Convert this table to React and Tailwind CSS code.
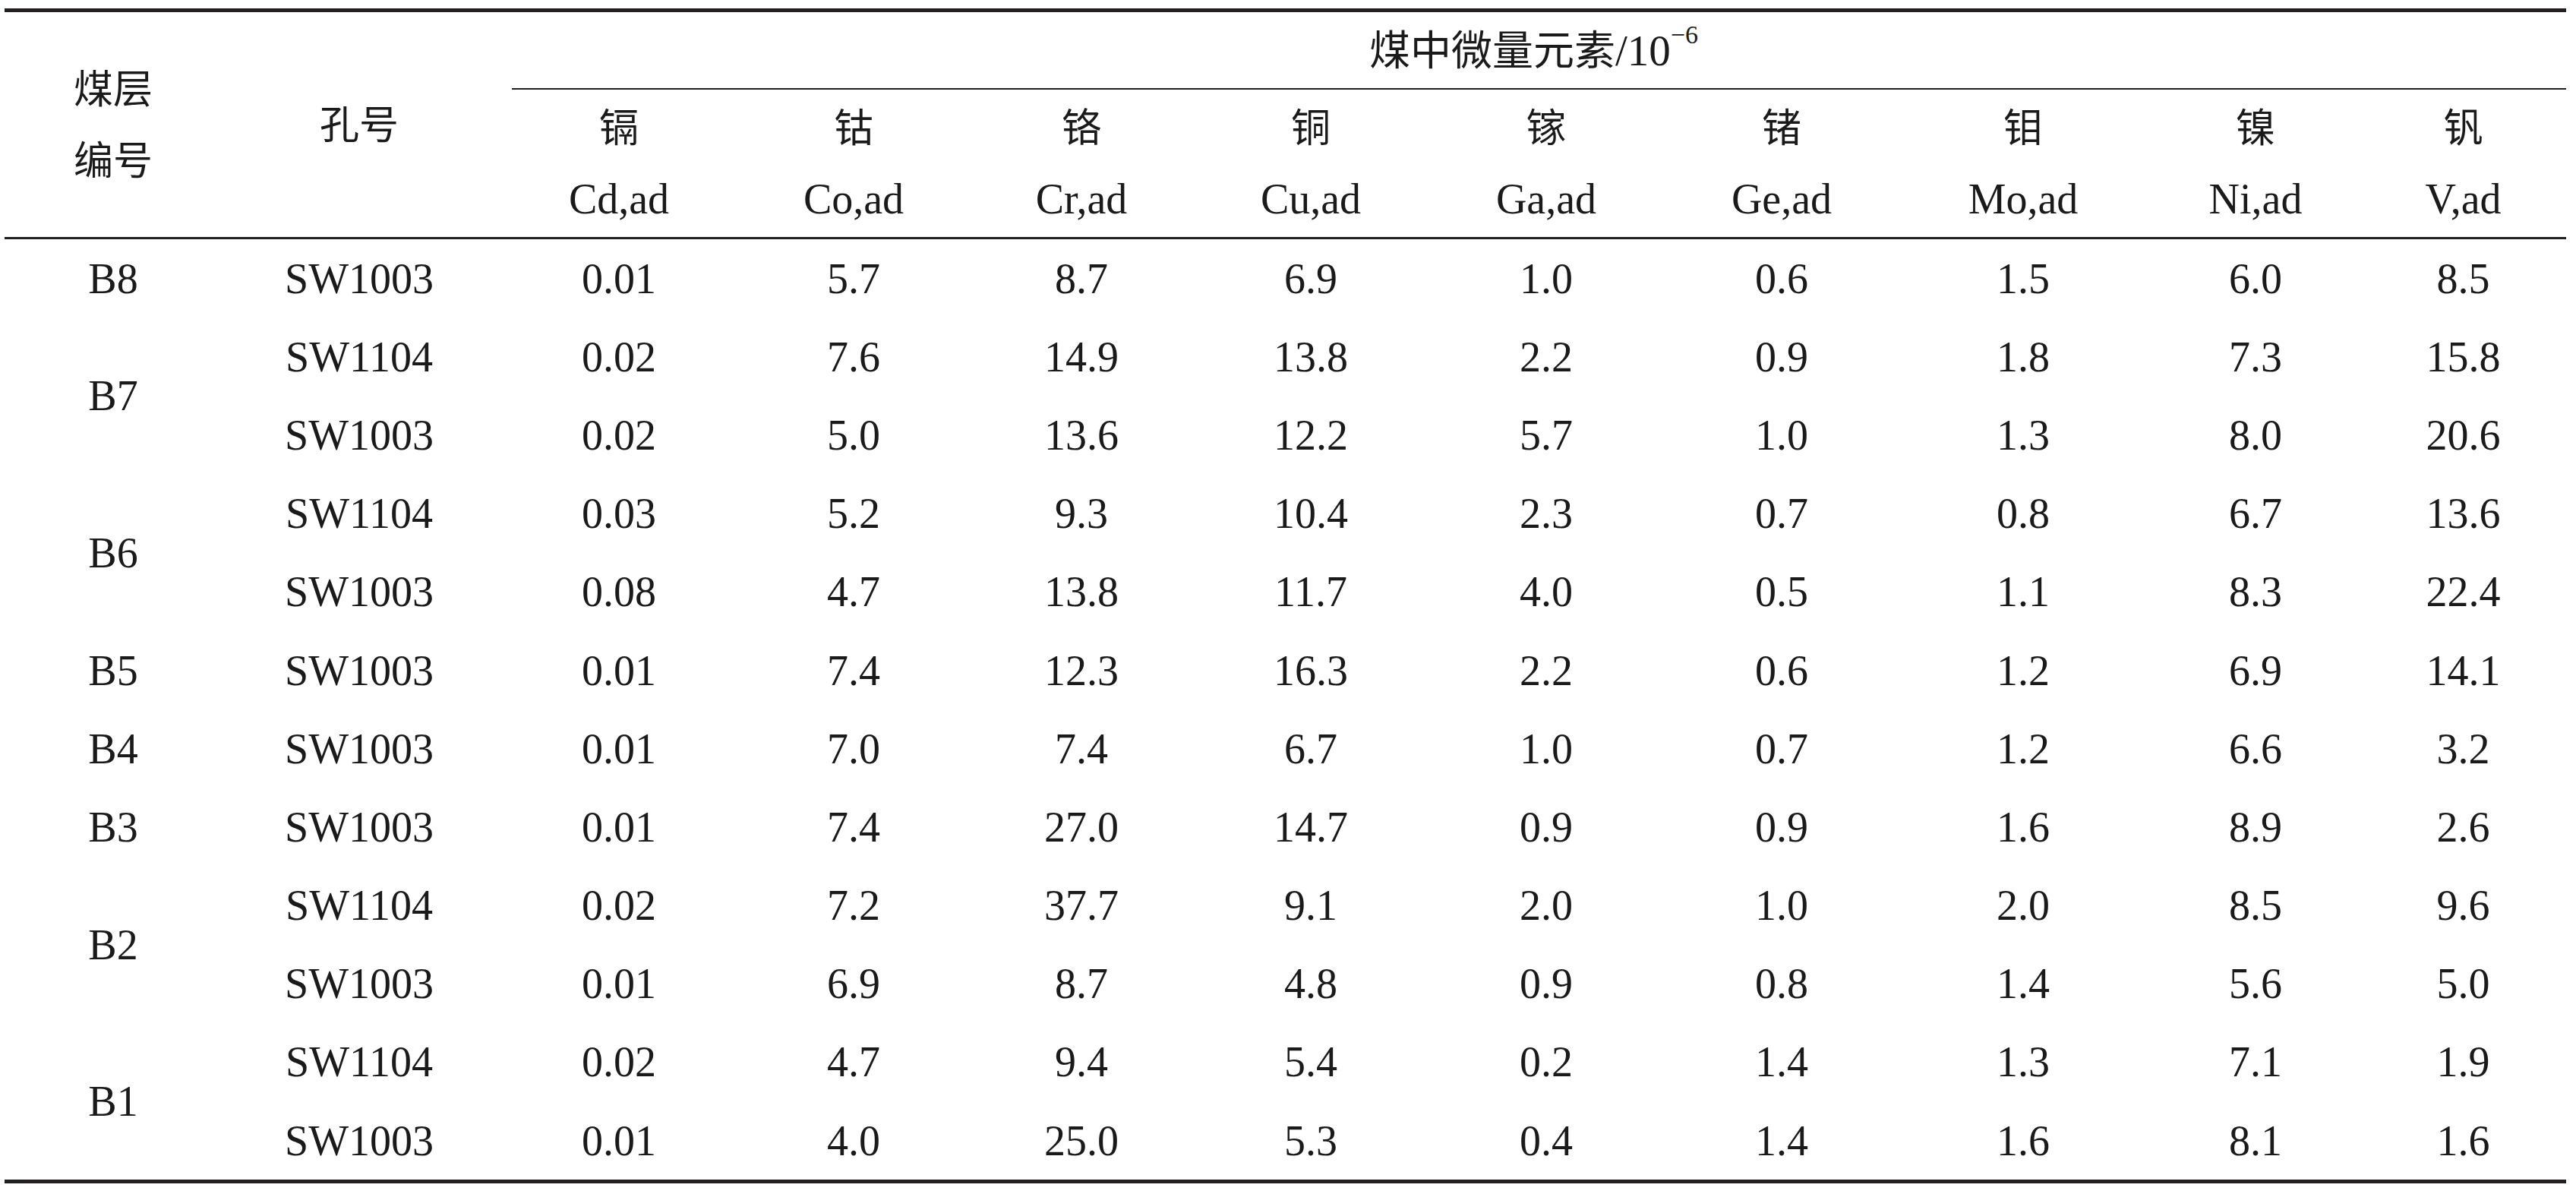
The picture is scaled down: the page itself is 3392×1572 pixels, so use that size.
const cols = 'grid-cols-[286px_362px_322px_296px_304px_300px_320px_300px_336px_276px_271px]';
const serif = "font-['Liberation_Serif','Noto_Sans_CJK_SC',serif]";
const cjk = "font-['Noto_Sans_CJK_SC','Liberation_Serif',sans-serif]";

const elements = [
  ['镉', 'Cd,ad'],
  ['钴', 'Co,ad'],
  ['铬', 'Cr,ad'],
  ['铜', 'Cu,ad'],
  ['镓', 'Ga,ad'],
  ['锗', 'Ge,ad'],
  ['钼', 'Mo,ad'],
  ['镍', 'Ni,ad'],
  ['钒', 'V,ad'],
];

const groups = [
  { seam: 'B8', rows: [['SW1003', '0.01', '5.7', '8.7', '6.9', '1.0', '0.6', '1.5', '6.0', '8.5']] },
  {
    seam: 'B7',
    rows: [
      ['SW1104', '0.02', '7.6', '14.9', '13.8', '2.2', '0.9', '1.8', '7.3', '15.8'],
      ['SW1003', '0.02', '5.0', '13.6', '12.2', '5.7', '1.0', '1.3', '8.0', '20.6'],
    ],
  },
  {
    seam: 'B6',
    rows: [
      ['SW1104', '0.03', '5.2', '9.3', '10.4', '2.3', '0.7', '0.8', '6.7', '13.6'],
      ['SW1003', '0.08', '4.7', '13.8', '11.7', '4.0', '0.5', '1.1', '8.3', '22.4'],
    ],
  },
  { seam: 'B5', rows: [['SW1003', '0.01', '7.4', '12.3', '16.3', '2.2', '0.6', '1.2', '6.9', '14.1']] },
  { seam: 'B4', rows: [['SW1003', '0.01', '7.0', '7.4', '6.7', '1.0', '0.7', '1.2', '6.6', '3.2']] },
  { seam: 'B3', rows: [['SW1003', '0.01', '7.4', '27.0', '14.7', '0.9', '0.9', '1.6', '8.9', '2.6']] },
  {
    seam: 'B2',
    rows: [
      ['SW1104', '0.02', '7.2', '37.7', '9.1', '2.0', '1.0', '2.0', '8.5', '9.6'],
      ['SW1003', '0.01', '6.9', '8.7', '4.8', '0.9', '0.8', '1.4', '5.6', '5.0'],
    ],
  },
  {
    seam: 'B1',
    rows: [
      ['SW1104', '0.02', '4.7', '9.4', '5.4', '0.2', '1.4', '1.3', '7.1', '1.9'],
      ['SW1003', '0.01', '4.0', '25.0', '5.3', '0.4', '1.4', '1.6', '8.1', '1.6'],
    ],
  },
];

function Header() {
  return (
    <div className={`grid ${cols} grid-rows-[102px_194px] border-b-[3px] border-[#231f20]`}>
      <div className={`row-span-2 flex flex-col items-center justify-center ${cjk} text-[52px] leading-[94px]`}>
        <span className="-translate-y-[3px]">煤层</span>
        <span className="-translate-y-[3px]">编号</span>
      </div>
      <div className={`row-span-2 flex items-center justify-center ${cjk} text-[52px] leading-none`}>
        <span className="-translate-y-[3px]">孔号</span>
      </div>
      {/* group title, rule under it starts a little right of the Cd column */}
      <div className="col-span-9 ml-[20px] pr-[14px] border-b-2 border-[#231f20] flex items-center justify-center">
        <span className={`${cjk} text-[54px] leading-none -translate-y-[3px]`}>煤中微量元素</span>
        <span className={`${serif} text-[57px] leading-none`}>/10</span>
        <span className={`${serif} text-[34px] leading-none relative -top-[20px]`}>−6</span>
      </div>
      {elements.map(([cn, sym]) => (
        <div key={sym} className="flex flex-col items-center justify-center">
          <span className={`${cjk} text-[52px] leading-[94px] -translate-y-[3px]`}>{cn}</span>
          <span className={`${serif} text-[56px] leading-[94px]`}>{sym}</span>
        </div>
      ))}
    </div>
  );
}

function Body() {
  return (
    <div className={`grid ${cols} grid-rows-[repeat(12,103.2px)] ${serif} text-[56px] leading-none`}>
      {groups.map(g => [
        <div
          key={g.seam}
          className={`${g.rows.length === 2 ? 'row-span-2' : 'row-span-1'} flex items-center justify-center`}
        >
          {g.seam}
        </div>,
        ...g.rows.flatMap((r, i) =>
          r.map((v, j) => (
            <div key={`${g.seam}-${i}-${j}`} className="flex items-center justify-center">
              {v}
            </div>
          ))
        ),
      ])}
    </div>
  );
}

export default function App() {
  return (
    <div className="w-[3392px] h-[1572px] bg-white pt-[11px] pl-[6px] text-[#1a1a1a]">
      <div className="w-[3373px] border-t-[5px] border-b-[5px] border-[#231f20]">
        <Header />
        <Body />
      </div>
    </div>
  );
}
